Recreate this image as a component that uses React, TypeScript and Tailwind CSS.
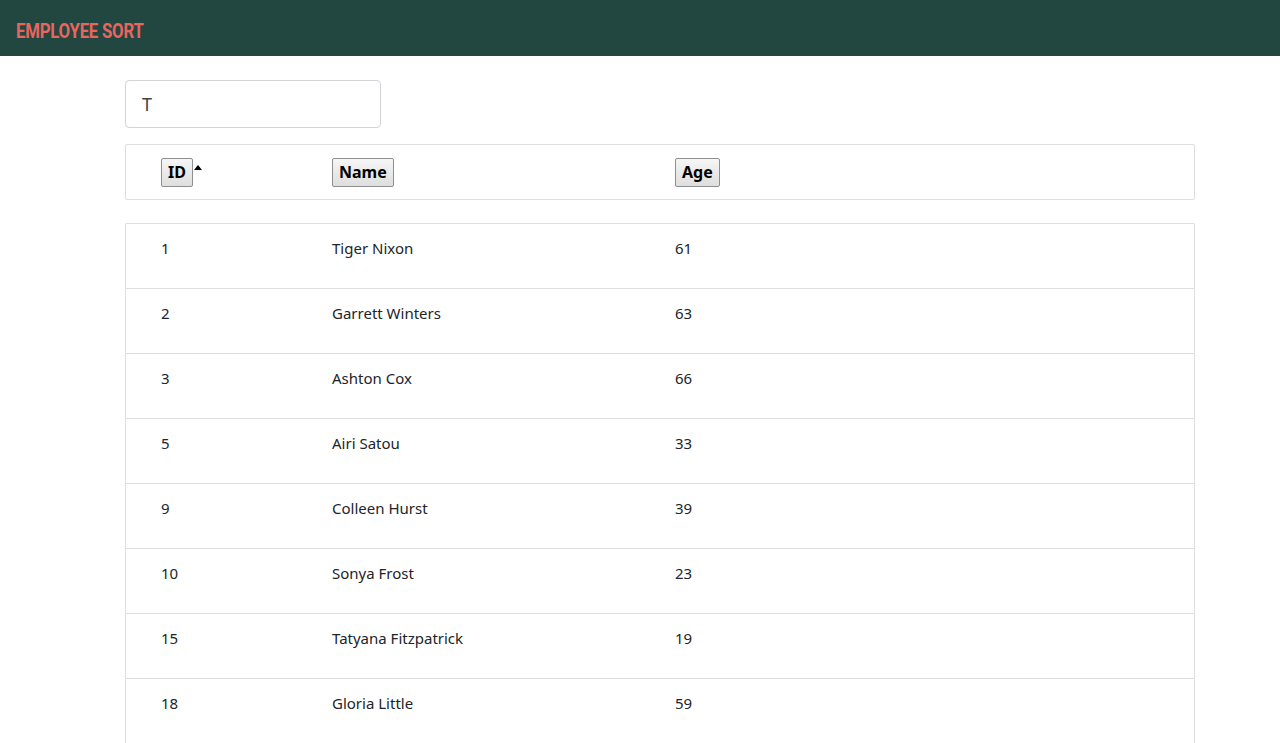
import React from "react";

const rows = [
  { id: 1, name: "Tiger Nixon", age: 61 },
  { id: 2, name: "Garrett Winters", age: 63 },
  { id: 3, name: "Ashton Cox", age: 66 },
  { id: 5, name: "Airi Satou", age: 33 },
  { id: 9, name: "Colleen Hurst", age: 39 },
  { id: 10, name: "Sonya Frost", age: 23 },
  { id: 15, name: "Tatyana Fitzpatrick", age: 19 },
  { id: 18, name: "Gloria Little", age: 59 },
];

const btn =
  "h-[29px] px-[6px] border border-[#8f8f8f] rounded-[2px] bg-gradient-to-b from-[#f6f6f6] to-[#dedede] text-[16px] font-bold text-black leading-none";

export default function App() {
  return (
    <div className="min-h-screen bg-white text-[#212529]" style={{ fontFamily: '"Noto Sans", "Open Sans", sans-serif' }}>
      <header className="h-14 bg-[#224640] flex items-center px-4 pt-[5px]">
        <h1
          className="text-[20px] font-bold text-[#ea655d] tracking-[-0.3px] scale-x-[0.84] origin-left whitespace-nowrap"
          style={{ fontFamily: 'Roboto, "Liberation Sans", sans-serif' }}
        >
          EMPLOYEE SORT
        </h1>
      </header>
      <main className="ml-[125px] w-[1070px] pt-6">
        <div className="w-[256px] h-12 border border-[#d4d4d8] rounded-[4px] flex items-center px-4 text-[18px] text-[#444]">
          T
        </div>
        <div className="mt-4 h-14 border border-[#dedede] rounded-[2px] grid grid-cols-[171px_343px_1fr] pl-[35px] items-center">
          <div className="flex items-start">
            <button className={btn}>ID</button>
            <span className="ml-[1px] mt-[7px] w-0 h-0 border-l-[4.5px] border-r-[4.5px] border-b-[5px] border-l-transparent border-r-transparent border-b-black" />
          </div>
          <div>
            <button className={btn}>Name</button>
          </div>
          <div>
            <button className={btn}>Age</button>
          </div>
        </div>
        <div className="mt-[23px] border-t border-x border-[#dedede] rounded-t-[2px]">
          {rows.map((r, i) => (
            <div
              key={r.id}
              className={`h-[65px] grid grid-cols-[171px_343px_1fr] pl-[35px] pt-[13px] text-[15px] ${i < rows.length - 1 ? "border-b border-[#dedede]" : ""}`}
            >
              <div>{r.id}</div>
              <div>{r.name}</div>
              <div>{r.age}</div>
            </div>
          ))}
        </div>
      </main>
    </div>
  );
}
